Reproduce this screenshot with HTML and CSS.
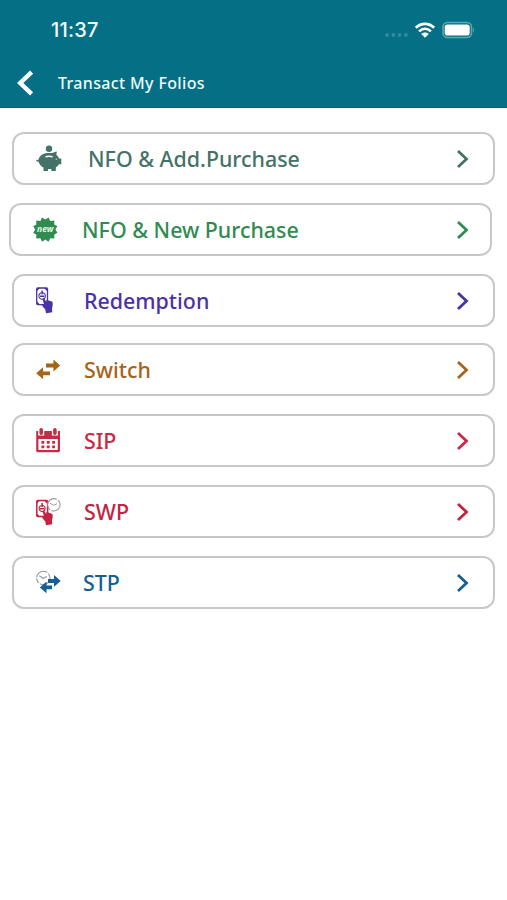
FILE: index.html
```
<!DOCTYPE html>
<html lang="en">
<head>
<meta charset="utf-8">
<title>Transact My Folios</title>
<link rel="stylesheet" href="styles.css">
</head>
<body>
<header class="header">
  <div class="status">
    <span class="time">11:37</span>
    <span class="indicators">
      <svg class="dots" width="26" height="8" viewBox="0 0 26 8"><g fill="#3788a0"><circle cx="3" cy="5" r="1.9"/><circle cx="9.3" cy="5" r="1.9"/><circle cx="15.6" cy="5" r="1.9"/><circle cx="21.9" cy="5" r="1.9"/></g></svg>
      <svg class="wifi" width="22" height="18" viewBox="0 0 22 18"><g fill="none" stroke="#fff" stroke-width="2.7"><path d="M1.8 6.8C7 1.5 15 1.5 20.2 6.8"/><path d="M5.1 10.4C8.6 7 13.4 7 16.9 10.4"/></g><path d="M11 16.8 7.2 12.9C9.3 10.9 12.7 10.9 14.8 12.9Z" fill="#fff"/></svg>
      <svg class="battery" width="34" height="18" viewBox="0 0 34 18"><rect x="1" y="1.5" width="28.5" height="15" rx="4.5" fill="none" stroke="#62a5b4" stroke-width="1.6"/><rect x="2.7" y="3.4" width="25" height="11.2" rx="2.8" fill="#fff"/><path d="M31 6.4Q33.2 9 31 11.6Z" fill="#62a5b4"/></svg>
    </span>
  </div>
  <div class="titlebar">
    <svg class="back" width="20" height="28" viewBox="0 0 20 28"><path d="M15.6 3.2 4.2 14 15.6 24.8" fill="none" stroke="#fff" stroke-width="4.4"/></svg>
    <h1 class="title">Transact My Folios</h1>
  </div>
</header>
<main class="list">
  <a class="card card--add">
    <svg class="icon" width="28" height="28" viewBox="0 0 28 28"><circle cx="14" cy="3.7" r="3.2" fill="currentColor"/><path d="M1 14Q1.8 16.2 3.5 14.6C4.5 10.4 8.5 8 13 8H17.500Q20 6.500 21.800 6.400L21.400 10Q23.400 11.500 24 13.400H26.300V19.200H24Q22.800 21.200 20.800 22.500V26H16.300V24H13V26H8.500V22.600Q4.500 20.300 3.500 16.400Q1 17.400 1 14Z" fill="currentColor"/><path d="M10.500 11.700Q14 10.800 17.600 11.700" fill="none" stroke="#fff" stroke-width="1.400"/><circle cx="21.400" cy="14.300" r=".8" fill="#b9cec9"/></svg>
    <span class="label">NFO &amp; Add.Purchase</span>
    <svg class="chevron" width="16" height="22" viewBox="0 0 16 22"><path d="M3 3 11.5 11 3 19"/></svg>
  </a>
  <a class="card card--new">
    <svg class="icon" width="28" height="28" viewBox="0 0 28 28"><path d="M13.3 3.600 16.600 1.500 18.200 4.900 22.400 4.500 22.200 8.400 25.400 10.300 23.400 13.500 25.400 16.800 22.200 18.700 22.400 22.600 18.200 22.200 16.600 25.700 13.300 23.500 10 25.700 8.400 22.200 4.200 22.600 4.400 18.700 1.200 16.800 3.200 13.500 1.200 10.300 4.400 8.400 4.200 4.500 8.400 4.900 10 1.500Z" fill="currentColor"/><text class="new" x="13.300" y="15.900" text-anchor="middle">new</text></svg>
    <span class="label">NFO &amp; New Purchase</span>
    <svg class="chevron" width="16" height="22" viewBox="0 0 16 22"><path d="M3 3 11.5 11 3 19"/></svg>
  </a>
  <a class="card card--redeem">
    <svg class="icon" width="28" height="28" viewBox="0 0 28 28"><rect x="1.700" y="1" width="10.800" height="16.600" rx="1" fill="none" stroke="currentColor" stroke-width="1.300"/><path d="M2 1h3L2 4ZM12 1H9l3 3ZM2 17.500v-3l3 3Z" fill="currentColor"/><circle cx="7.100" cy="9" r="3.200" fill="none" stroke="currentColor" stroke-width="1.100"/><path d="M7.100 3.500v4M5 9.300h4.300" stroke="currentColor" stroke-width="1.400"/><path d="M7.500 12Q8.200 10.400 9.500 11.800L11.300 15V12.700L17.500 14.800Q18.200 18.200 17 21.500L17.300 25.200 11 26.200 10.300 22.500 7 18.800Q7.800 17.200 9.300 18.200Z" fill="currentColor"/></svg>
    <span class="label">Redemption</span>
    <svg class="chevron" width="16" height="22" viewBox="0 0 16 22"><path d="M3 3 11.5 11 3 19"/></svg>
  </a>
  <a class="card card--switch">
    <svg class="icon" width="28" height="28" viewBox="0 0 28 28"><path d="M11 7.600H18.400V3.400L25.200 9.500 18.400 15.500V11.500H11ZM15 15.400H8.100V11.300L1.200 17.200 8.100 23.200V19.200H15Z" fill="currentColor"/></svg>
    <span class="label">Switch</span>
    <svg class="chevron" width="16" height="22" viewBox="0 0 16 22"><path d="M3 3 11.5 11 3 19"/></svg>
  </a>
  <a class="card card--sip">
    <svg class="icon" width="28" height="28" viewBox="0 0 28 28"><path d="M1.200 4H3.200V8.500H9.200V4H16.900V8.500H22.900V4H25V23.800Q25 25.200 23.500 25.200H2.700Q1.200 25.200 1.200 23.800Z" fill="currentColor"/><rect x="3.400" y="12" width="19.400" height="11" rx=".8" fill="#fff"/><path d="M6.200 2.700V6.300M19.900 2.700V6.300" stroke="currentColor" stroke-width="3.600" stroke-linecap="round"/><path d="M6.400 15.300H20M6.400 19.800H20" stroke="currentColor" stroke-width="2.700" stroke-dasharray="2.900 2.500"/></svg>
    <span class="label">SIP</span>
    <svg class="chevron" width="16" height="22" viewBox="0 0 16 22"><path d="M3 3 11.5 11 3 19"/></svg>
  </a>
  <a class="card card--swp">
    <svg class="icon" width="28" height="28" viewBox="0 0 28 28"><rect x="1.800" y="2.500" width="10.800" height="16" rx="1" fill="none" stroke="currentColor" stroke-width="1.500"/><path d="M2 2.500h3l-3 3ZM12 2.500H9l3 3ZM2 18.500v-3l3 3Z" fill="currentColor"/><circle cx="7.100" cy="10.500" r="3" fill="none" stroke="currentColor" stroke-width="1.100"/><path d="M7.100 5v4M5 10.800h4.300" stroke="currentColor" stroke-width="1.500"/><path d="M7.500 13.500Q8.200 12 9.500 13.300L11.300 16.300V13.800L17.500 16Q18.200 19.200 17 22.500L17.300 26.200 11 27.200 10.300 23.500 7 19.800Q7.800 18.200 9.300 19.200Z" fill="currentColor"/><circle cx="18.900" cy="6.800" r="6.200" fill="#fff" stroke="#999" stroke-width="1.100" stroke-dasharray="12 1.500 5 1"/><path d="M15 5.100 18.500 7.300 22.200 5.700" fill="none" stroke="#999" stroke-width="1"/></svg>
    <span class="label">SWP</span>
    <svg class="chevron" width="16" height="22" viewBox="0 0 16 22"><path d="M3 3 11.5 11 3 19"/></svg>
  </a>
  <a class="card card--stp">
    <svg class="icon" width="28" height="28" viewBox="0 0 28 28"><circle cx="8.300" cy="9" r="6.700" fill="none" stroke="#999" stroke-width="1.100" stroke-dasharray="14 1.500 5 1"/><path d="M4.300 6.800 8 9.300 12 7.500" fill="none" stroke="#999" stroke-width="1.100"/><path d="M13 10.100H19V6L25.700 12 19 17.800V13.900H13ZM17 16.500H11.500V12.500L4.800 18.400 11.500 24.300V20.300H17Z" fill="currentColor"/></svg>
    <span class="label">STP</span>
    <svg class="chevron" width="16" height="22" viewBox="0 0 16 22"><path d="M3 3 11.5 11 3 19"/></svg>
  </a>
</main>
</body>
</html>
```
FILE: styles.css
```
* { box-sizing: border-box; }
body {
  margin: 0;
  min-height: 900px;
  background: #fff;
  font-family: "Noto Sans", "Open Sans", sans-serif;
}
.header {
  height: 108px;
  background: #046f85;
  border-bottom: 1px solid #03647a;
  color: #f0fbfc;
}
.status {
  display: flex;
  justify-content: space-between;
  align-items: center;
  height: 59px;
  padding: 0 31px 0 51px;
}
.time {
  font: 500 20px/24px Inter, sans-serif;
  letter-spacing: 0.2px;
}
.indicators { display: flex; align-items: center; }
.dots { margin: 8px 4px 0 0; }
.wifi { margin-right: 6px; }
.titlebar {
  display: flex;
  align-items: center;
  height: 48px;
  padding-left: 16px;
}
.title {
  margin: 0 0 0 22px;
  font-size: 16px;
  line-height: 22px;
  font-weight: 500;
  letter-spacing: 0.35px;
}
.list {
  display: flex;
  flex-direction: column;
  gap: 18px;
  padding: 24px 12px 0;
}
.card {
  display: flex;
  align-items: center;
  height: 53px;
  width: 483px;
  padding: 0 22px 0 21px;
  border: 2px solid #c8c8c9;
  border-radius: 12px;
}
.icon { flex: none; margin-right: 21px; }
.label {
  flex: 1;
  font-size: 21.4px;
  line-height: 30px;
  font-weight: 500;
  white-space: nowrap;
}
.chevron { flex: none; }
.chevron path { fill: none; stroke: currentColor; stroke-width: 2.8; }
.new {
  fill: #e5f5e9;
  font: italic 700 8.5px "Noto Sans", sans-serif;
}
.card--add { color: #457268; }
.card--add .icon { margin-right: 25px; }
.card--new { color: #308b50; margin-left: -3px; padding-right: 19px; }
.card--new .icon { margin-right: 22px; }
.card--redeem { color: #4932a5; }
.card--switch { color: #a76318; margin-top: -2px; }
.card--sip { color: #c72b48; }
.card--swp { color: #c42342; }
.card--stp { color: #145f94; }
.card--stp .icon { margin-right: 20px; }
```
